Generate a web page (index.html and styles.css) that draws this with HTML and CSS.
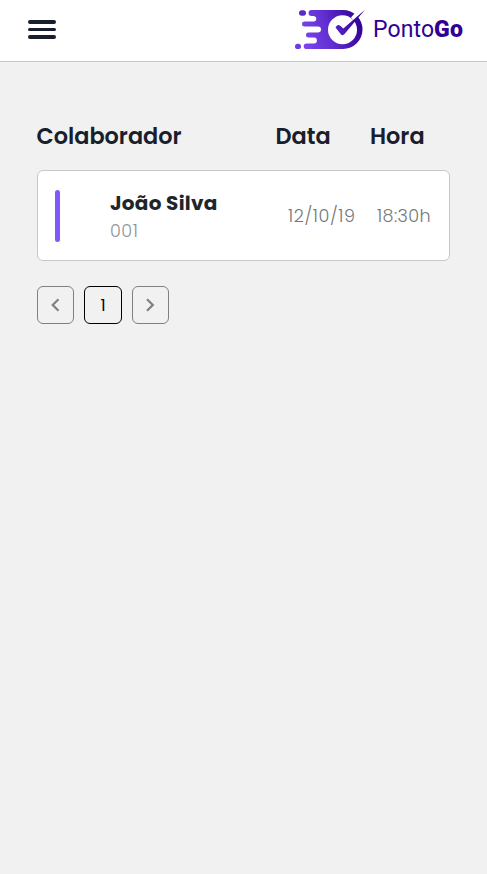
FILE: index.html
```html
<!DOCTYPE html>
<html lang="pt-BR">
<head>
<meta charset="utf-8">
<title>PontoGo</title>
<link rel="stylesheet" href="styles.css">
</head>
<body>
<header class="topbar">
  <button class="menu" aria-label="Menu"><span></span><span></span><span></span></button>
  <div class="brand">
    <svg class="logo" width="72" height="42" viewBox="294 9 72 42" aria-hidden="true">
      <defs><linearGradient id="g" gradientUnits="userSpaceOnUse" x1="300" y1="42" x2="362" y2="24"><stop offset="0" stop-color="#7f47f6"/><stop offset=".45" stop-color="#6230d0"/><stop offset="1" stop-color="#310095"/></linearGradient></defs>
      <path fill="url(#g)" d="M311.500 10H343A19.500 19.500 0 0 1 343 49H306.500a2.700 2.700 0 0 1 0-5.600H314a2.900 2.900 0 0 0 0-5.800H308.500a2.500 2.500 0 0 1 0-5H318a3 3 0 0 0 0-6H304.500a2.500 2.500 0 0 1 0-5H314a2.900 2.900 0 0 0 0-5.700H311.500a2.700 2.700 0 0 1 0-5.900Z"/>
      <rect x="299" y="10.300" width="7" height="5.400" rx="2.700" fill="#5b2bc4"/>
      <rect x="295" y="43.700" width="6" height="5.400" rx="2.700" fill="#7139e8"/>
      <circle cx="342.500" cy="29.700" r="14.500" fill="#fff"/>
      <path fill="#fff" d="M351 17.500L354.500 13.500L357 10H364L359 15.500L354 21Z"/>
      <path fill="url(#g)" d="M335.500 27.500Q337.500 24 340 25.500L343.300 28.500L365 9.800L344.500 34Q342.800 36 341 34.500Z"/>
    </svg>
    <span class="name">Ponto<b>Go</b></span>
  </div>
</header>
<main>
  <div class="row head"><span class="h-name">Colaborador</span><span class="h-date">Data</span><span class="h-time">Hora</span></div>
  <section class="row card">
    <i class="accent"></i>
    <div class="person"><strong>João Silva</strong><small>001</small></div>
    <span class="date">12/10/19</span>
    <span class="time">18:30h</span>
  </section>
  <nav class="pages">
    <button aria-label="Anterior"><svg width="10" height="14" viewBox="1 0 10 14"><path d="M8.500 1.200L2.700 7L8.500 12.800"/></svg></button>
    <button class="current">1</button>
    <button aria-label="Próxima"><svg width="10" height="14" viewBox="1 0 10 14"><path d="M2 1.200L7.800 7L2 12.800"/></svg></button>
  </nav>
</main>
</body>
</html>
```
FILE: styles.css
```css
* { box-sizing: border-box; }
body { margin: 0; min-height: 100vh; background: #f1f1f1; font-family: Poppins, Inter, sans-serif; color: #191e2d; }
button { padding: 0; background: none; font: inherit; }
.topbar { height: 62px; display: flex; justify-content: space-between; background: #fff; border-bottom: 1px solid #c8c8c8; padding: 0 22px 0 28px; }
.menu { width: 28px; height: 19px; margin-top: 20px; border: 0; display: flex; flex-direction: column; justify-content: space-between; }
.menu span { width: 28px; height: 3.600px; border-radius: 2px; background: #191e2d; }
.brand { display: flex; align-items: flex-start; }
.logo { margin-top: 9px; }
.name { width: 92px; margin: 16px 0 0 7px; font: 400 23px/28px Roboto, sans-serif; letter-spacing: .1px; color: #310095; white-space: nowrap; }
.name b { font-weight: 900; }
main { padding: 56px 37px 0; }
.row { display: flex; white-space: nowrap; }
.head { font-size: 22.400px; line-height: 36px; font-weight: 600; margin-left: -.500px; }
.h-name { width: 239px; }
.h-date { width: 94.500px; }
.card { height: 91px; margin-top: 16px; padding: 0 17px; align-items: center; background: #fff; border: 1px solid #c8c8c8; border-radius: 6px; }
.accent { width: 5px; height: 52px; border-radius: 3px; background: #8257ff; }
.person { width: 178px; margin-left: 50px; padding-top: 2px; display: flex; flex-direction: column; line-height: 28px; }
.person strong { font-size: 20px; letter-spacing: .250px; font-weight: 700; color: #1d272b; }
.person small { font-size: 17.600px; font-weight: 300; font-kerning: none; letter-spacing: .500px; color: #8f9595; }
.date, .time { font-size: 17.600px; font-weight: 300; font-kerning: none; color: #737979; }
.date { width: 89px; letter-spacing: .600px; }
.time { letter-spacing: .400px; }
.pages { display: flex; gap: 10px; margin-top: 25px; }
.pages button { width: 37px; height: 38px; display: flex; align-items: center; justify-content: center; border: 1px solid #808080; border-radius: 6px; }
.pages .current { width: 38px; border-color: #000; color: #000; font-size: 16px; }
.pages path { fill: none; stroke: #808080; stroke-width: 2.200; }
```
